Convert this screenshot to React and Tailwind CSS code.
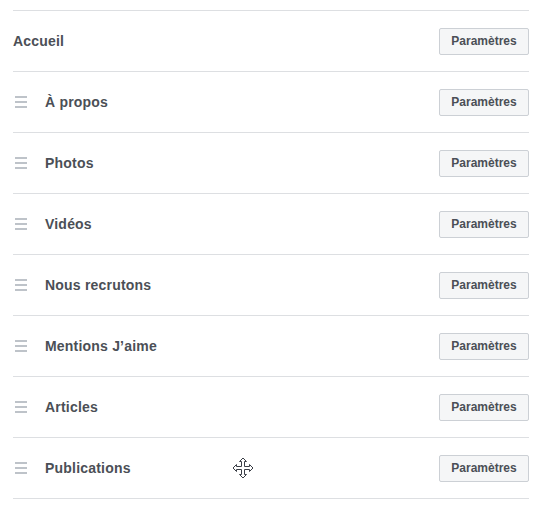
import React from 'react';

const tabs = ['À propos', 'Photos', 'Vidéos', 'Nous recrutons', 'Mentions J’aime', 'Articles', 'Publications'];

const Grip = () => (
  <div className="flex w-[12px] flex-col gap-[3px]">
    <span className="block h-[2px] w-full bg-[#bec3c9]" />
    <span className="block h-[2px] w-full bg-[#bec3c9]" />
    <span className="block h-[2px] w-full bg-[#bec3c9]" />
  </div>
);

const SettingsButton = () => (
  <button className="h-[27px] w-[90px] rounded-[2px] border border-[#ccd0d5] bg-[#f5f6f7] text-[12px] font-bold text-[#4b4f56]">
    Paramètres
  </button>
);

const MoveCursor = () => (
  <svg width="22" height="22" viewBox="0 0 22 22" className="absolute left-[232px] top-[457px]">
    <path
      d="M11 1 L14.5 4.5 L12.5 4.5 L12.5 9.5 L17.5 9.5 L17.5 7.5 L21 11 L17.5 14.5 L17.5 12.5 L12.5 12.5 L12.5 17.5 L14.5 17.5 L11 21 L7.5 17.5 L9.5 17.5 L9.5 12.5 L4.5 12.5 L4.5 14.5 L1 11 L4.5 7.5 L4.5 9.5 L9.5 9.5 L9.5 4.5 L7.5 4.5 Z"
      fill="#fff"
      stroke="#3b3f47"
      strokeWidth="1"
      strokeLinejoin="miter"
    />
  </svg>
);

export default function App() {
  return (
    <div className="relative h-[507px] w-[547px] bg-white font-['Liberation_Sans',Arial,sans-serif] text-[#4b4f56]">
      <div className="ml-[13px] w-[516px] pt-[10px]">
        <div className="border-t border-[#dddfe2]">
          {/* Accueil - fixed, no grip */}
          <div className="flex h-[61px] items-center justify-between border-b border-[#dddfe2]">
            <span className="text-[14px] font-bold tracking-[0.2px]">Accueil</span>
            <SettingsButton />
          </div>
          {tabs.map((t) => (
            <div key={t} className="flex h-[61px] items-center justify-between border-b border-[#dddfe2]">
              <div className="flex items-center">
                <div className="ml-[2px] mr-[18px]">
                  <Grip />
                </div>
                <span className="text-[14px] font-bold tracking-[0.2px]">{t}</span>
              </div>
              <SettingsButton />
            </div>
          ))}
        </div>
      </div>
      <MoveCursor />
    </div>
  );
}
